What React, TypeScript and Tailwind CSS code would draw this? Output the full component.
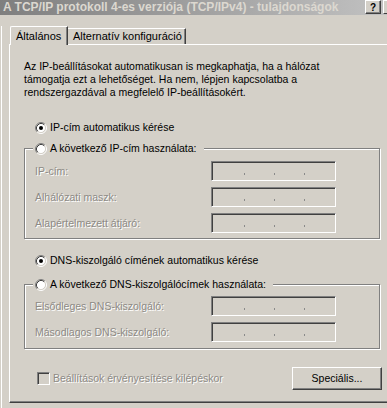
import React from "react";

function Radio({ checked }: { checked?: boolean }) {
  return (
    <svg width="12" height="12" viewBox="0 0 12 12" className="shrink-0">
      <circle cx="6" cy="6" r="4.5" fill="#fff" />
      <path d="M2.11 9.89 A5.5 5.5 0 0 1 9.89 2.11" stroke="#808080" fill="none" />
      <path d="M9.89 2.11 A5.5 5.5 0 0 1 2.11 9.89" stroke="#fff" fill="none" />
      <path d="M2.82 9.18 A4.5 4.5 0 0 1 9.18 2.82" stroke="#404040" fill="none" />
      <path d="M9.18 2.82 A4.5 4.5 0 0 1 2.82 9.18" stroke="#d4d0c8" fill="none" />
      {checked && <circle cx="6" cy="6" r="2" fill="#000" />}
    </svg>
  );
}

function RadioRow({ label, checked }: { label: string; checked?: boolean }) {
  return (
    <div className="flex items-center gap-[3px] h-[13px] whitespace-nowrap">
      <Radio checked={checked} />
      <span>{label}</span>
    </div>
  );
}

// sunken, disabled IP address box
function IpField() {
  return (
    <div className="w-[125px] h-[20px] flex items-end gap-[29px] pl-[32px] pb-[5px] border border-t-[#808080] border-l-[#808080] border-b-white border-r-white shadow-[inset_1px_1px_0_#404040,inset_-1px_-1px_0_#d4d0c8] bg-[#d4d0c8]">
      <span className="w-px h-[2px] bg-[#8a8a8a]" />
      <span className="w-px h-[2px] bg-[#8a8a8a]" />
      <span className="w-px h-[2px] bg-[#8a8a8a]" />
    </div>
  );
}

function FieldRow({ label }: { label: string }) {
  return (
    <div className="flex items-center h-[20px]">
      <span className="w-[186px] pl-[10px] text-[#8d8a85] [text-shadow:1px_1px_0_#fff] whitespace-nowrap">{label}</span>
      <IpField />
    </div>
  );
}

function GroupBox({ legend, rows, height, gapTop }: { legend: string; rows: string[]; height: string; gapTop: string }) {
  return (
    <div className={`ml-[14px] w-[356px] ${height} flex flex-col border border-[#808080] shadow-[inset_1px_1px_0_#fff,1px_1px_0_#fff]`}>
      <div className="-mt-[7px] ml-[8px] w-fit pl-[2px] pr-[7px] bg-[#d4d0c8]">
        <RadioRow label={legend} />
      </div>
      <div className={`${gapTop} flex flex-col gap-[6px]`}>
        {rows.map((r) => (
          <FieldRow key={r} label={r} />
        ))}
      </div>
    </div>
  );
}

export default function App() {
  return (
    <div className="w-[387px] h-[408px] overflow-hidden bg-[#d4d0c8] font-['Liberation_Sans',Arial,sans-serif] text-[10.5px] leading-[13px] text-black">
      {/* Title bar (inactive) */}
      <div className="w-[401px] h-[15px] flex items-start pl-[3px] pr-[2px] bg-gradient-to-r from-[#7f7f7f] to-[#c4c4c4]">
        <span className="flex-1 h-[15px] flex items-center text-[12px] font-bold text-[#dcd8d0] whitespace-nowrap">
          A TCP/IP protokoll 4-es verziója (TCP/IPv4) - tulajdonságok
        </span>
        <div className="w-[16px] h-[14px] flex items-center justify-center font-bold text-[10px] bg-[#d4d0c8] border border-t-white border-l-white border-b-[#404040] border-r-[#404040] shadow-[inset_-1px_-1px_0_#808080]">
          ?
        </div>
        <div className="ml-[2px] w-[16px] h-[14px] bg-[#d4d0c8] border border-t-white border-l-white border-b-[#404040] border-r-[#404040]" />
      </div>

      <div className="ml-px h-[393px] border-l border-white">
        {/* Tabs */}
        <div className="mt-[11px] ml-[8px] h-[18px] flex items-end text-[11px]">
          <div className="relative z-10 -mb-px w-[58px] h-[19px] flex items-center pl-[5px] bg-[#d4d0c8] border-t border-l border-r border-t-white border-l-white border-r-[#404040] shadow-[inset_-1px_0_0_#808080] rounded-tl-[2px] whitespace-nowrap">
            Általános
          </div>
          <div className="w-[118px] h-[16px] flex items-center pl-[5px] border-t border-r border-t-white border-r-[#404040] shadow-[inset_-1px_0_0_#808080] whitespace-nowrap">
            Alternatív konfiguráció
          </div>
        </div>

        {/* Tab panel */}
        <div className="ml-[7px] w-[392px] h-[359px] flex flex-col border-t border-l border-b border-t-white border-l-white border-b-[#404040] shadow-[inset_0_-1px_0_#808080]">
          <p className="mt-[15px] ml-[14px] whitespace-nowrap">
            Az IP-beállításokat automatikusan is megkaphatja, ha a hálózat
            <br />
            támogatja ezt a lehetőséget. Ha nem, lépjen kapcsolatba a
            <br />
            rendszergazdával a megfelelő IP-beállításokért.
          </p>

          <div className="mt-[22px] ml-[25px]">
            <RadioRow label="IP-cím automatikus kérése" checked />
          </div>

          <div className="mt-[14px]">
            <GroupBox
              legend="A következő IP-cím használata:"
              rows={["IP-cím:", "Alhálózati maszk:", "Alapértelmezett átjáró:"]}
              height="h-[91px]"
              gapTop="mt-[6px]"
            />
          </div>

          <div className="mt-[15px] ml-[25px]">
            <RadioRow label="DNS-kiszolgáló címének automatikus kérése" checked />
          </div>

          <div className="mt-[17px]">
            <GroupBox
              legend="A következő DNS-kiszolgálócímek használata:"
              rows={["Elsődleges DNS-kiszolgáló:", "Másodlagos DNS-kiszolgáló:"]}
              height="h-[65px]"
              gapTop="mt-[5px]"
            />
          </div>

          <div className="mt-[18px] w-[372px] h-[23px] flex items-center">
            <div className="ml-[27px] w-[13px] h-[13px] border border-t-[#808080] border-l-[#808080] border-b-white border-r-white shadow-[inset_1px_1px_0_#404040,inset_-1px_-1px_0_#d4d0c8] bg-[#d4d0c8]" />
            <span className="ml-[3px] text-[#8d8a85] [text-shadow:1px_1px_0_#fff] whitespace-nowrap">
              Beállítások érvényesítése kilépéskor
            </span>
            <button className="ml-auto w-[90px] h-[23px] flex items-center justify-center bg-[#d4d0c8] border border-t-white border-l-white border-b-[#404040] border-r-[#404040] shadow-[inset_-1px_-1px_0_#808080]">
              Speciális...
            </button>
          </div>
        </div>
      </div>
    </div>
  );
}
